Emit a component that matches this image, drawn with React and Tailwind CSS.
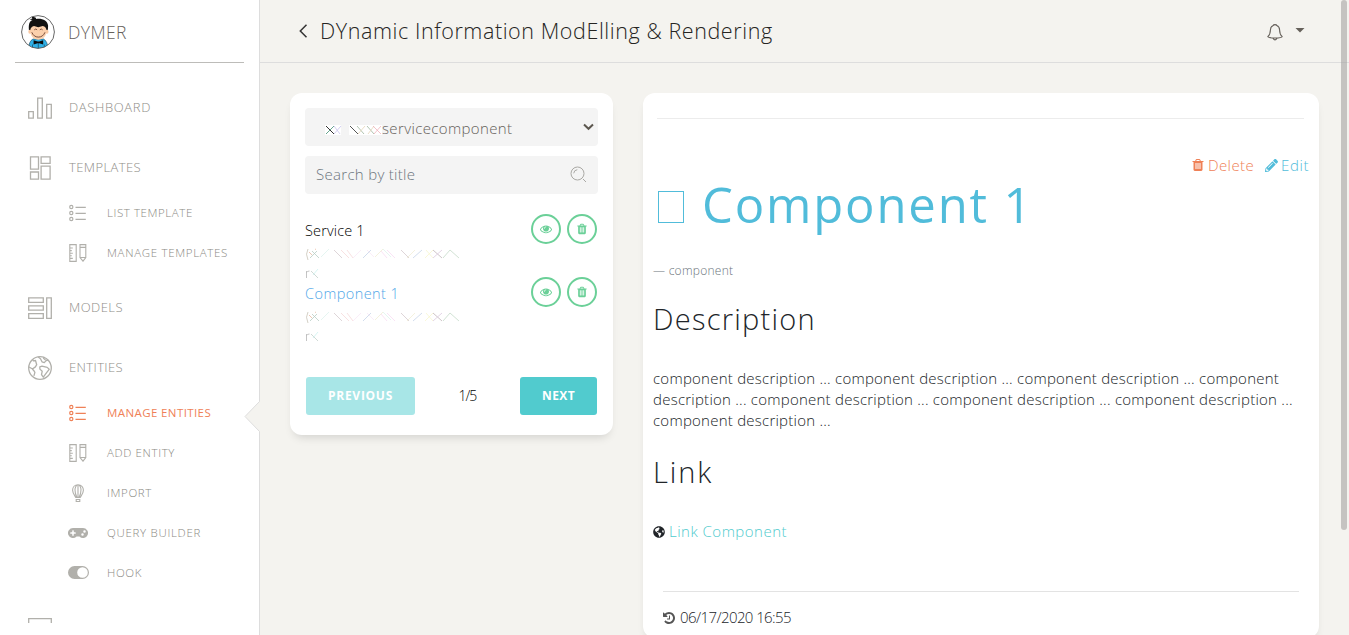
import { FaGamepad, FaGlobeAmericas, FaPencilAlt } from "react-icons/fa";

function BarsIcon() {
  return (
    <svg width="24" height="24" viewBox="0 0 24 24" fill="none" stroke="currentColor" strokeWidth="1.3">
      <path d="M.7 15.600h4.600v6.600H.7zM9.700 2.100h4.600v20.100H9.700zM18.700 8.400h4.600v13.800h-4.600z" />
    </svg>
  );
}

function TilesIcon() {
  return (
    <svg width="24" height="24" viewBox="0 0 24 24" fill="none" stroke="currentColor" strokeWidth="1.3">
      <path d="M2.500.8h8v12.400h-8zM13.100.8h9v6.600h-9zM2.500 16h8v7.200h-8zM13.100 10.200h9v13h-9z" />
    </svg>
  );
}

function ModelsIcon() {
  return (
    <svg width="24" height="24" viewBox="0 0 24 24" fill="none" stroke="currentColor" strokeWidth="1.3">
      <path d="M.7 1.900h14.600v4.400H.7zM.7 9.800h14.600v4.400H.7zM.7 17.700h14.600v4.600H.7zM18.700 1.900h4.600v20.400h-4.600z" />
    </svg>
  );
}

function EarthIcon() {
  return (
    <svg width="24" height="24" viewBox="0 0 24 24" fill="none" stroke="currentColor" strokeWidth="1.3" strokeLinejoin="round">
      <circle cx="12" cy="12" r="11.3" />
      <path d="M4.600 3.600l.8 1.200 2.100-.3 1.200 4.200-1.300 2.200-3 2.100 1.700 2 .8 1.300-1 3.600M4.600 13l-3.600-2M10.200.9l2.300 1.900 1.500 3 2.300.8 1.800-2 2.200-.6M16.200.8l-.7 1.400 2 1.800M11.800 10.800l2.200-.6 5.200 1.200 2 1.900-2.600 3.400-3.300 4.500-1.800-2.600.7-3.300-2.300-2.200z" />
    </svg>
  );
}

function ScreenIcon() {
  return (
    <svg width="24" height="24" viewBox="0 0 24 24" fill="none" stroke="currentColor" strokeWidth="1.3">
      <path d="M.7 2.600h22.600v16H.7z" />
    </svg>
  );
}

function ListIcon() {
  return (
    <svg width="18" height="18" viewBox="0 0 18 18" fill="none" stroke="currentColor" strokeWidth="1.2">
      <circle cx="2.3" cy="3" r="1.600" />
      <circle cx="2.3" cy="9" r="1.600" />
      <circle cx="2.3" cy="15" r="1.600" />
      <path d="M6.500 3.400h10.300M6.500 9.400h10.300M6.500 15.400h10.300" />
    </svg>
  );
}

function RulerIcon() {
  return (
    <svg width="18" height="18" viewBox="0 0 18 18" fill="none" stroke="currentColor" strokeWidth="1.1">
      <path d="M.8.6h6.400v16.800H.8zM1 4h2.800M1 6.600h1.800M1 9.200h2.800M1 11.800h1.800M1 14.400h2.800M11 .6h5.800v12.900L14 17.200l-3-3.700zM11 3.400h5.800M11 13.500h5.800" />
    </svg>
  );
}

function BalloonIcon() {
  return (
    <svg width="18" height="18" viewBox="0 0 18 18" fill="none" stroke="currentColor" strokeWidth="1.1">
      <path d="M9 .7c3.300 0 5.400 2.500 5.400 5.600 0 2.900-2 5-3.200 7.100H6.800C5.600 11.300 3.600 9.200 3.600 6.300 3.600 3.200 5.700.7 9 .7zM7.800 13.200C6.600 10.800 6 8.400 6 5.800 6 3.500 7.200.8 9 .8s3 2.700 3 5c0 2.600-.6 5-1.800 7.400M9 .7v12.700M7.200 15.500h3.600v2H7.200z" />
    </svg>
  );
}

function ToggleIcon() {
  return (
    <svg className="-mt-px" width="21" height="13" viewBox="0 0 21 13">
      <path fill="currentColor" fillRule="evenodd" d="M6.500 0h8a6.500 6.500 0 0 1 0 13h-8a6.500 6.500 0 0 1 0-13zM14.500 1.200a5.300 5.300 0 1 0 0 10.600 5.300 5.300 0 0 0 0-10.600z" />
    </svg>
  );
}

function TrashIcon({ className }) {
  return (
    <svg className={className} viewBox="0 0 1792 1792" fill="currentColor">
      <path d="M704 1376v-704q0-14-9-23t-23-9h-64q-14 0-23 9t-9 23v704q0 14 9 23t23 9h64q14 0 23-9t9-23zm256 0v-704q0-14-9-23t-23-9h-64q-14 0-23 9t-9 23v704q0 14 9 23t23 9h64q14 0 23-9t9-23zm256 0v-704q0-14-9-23t-23-9h-64q-14 0-23 9t-9 23v704q0 14 9 23t23 9h64q14 0 23-9t9-23zm-544-992h448l-48-117q-7-9-17-11h-317q-10 2-17 11zm928 32v64q0 14-9 23t-23 9h-96v948q0 83-47 143.500t-113 60.500h-832q-66 0-113-58.500t-47-141.500v-952h-96q-14 0-23-9t-9-23v-64q0-14 9-23t23-9h309l70-167q15-37 54-63t79-26h320q40 0 79 26t54 63l70 167h309q14 0 23 9t9 23z" />
    </svg>
  );
}

function EyeIcon() {
  return (
    <svg className="size-3" viewBox="0 0 1792 1792" fill="currentColor">
      <path d="M1664 960q-152-236-381-353 61 104 61 225 0 185-131.500 316.500t-316.500 131.500-316.500-131.500-131.500-316.500q0-121 61-225-229 117-381 353 133 205 333.500 326.500t434.500 121.500 434.500-121.500 333.500-326.500zm-720-384q0-20-14-34t-34-14q-125 0-214.500 89.500t-89.500 214.500q0 20 14 34t34 14 34-14 14-34q0-86 61-147t147-61q20 0 34-14t14-34zm848 384q0 34-20 69-140 230-376.500 368.500t-499.500 138.500-499.500-139-376.500-368q-20-35-20-69t20-69q140-229 376.500-368t499.500-139 499.500 139 376.500 368q20 35 20 69z" />
    </svg>
  );
}

function HistoryIcon() {
  return (
    <svg className="-ml-px size-[14px] text-[#555]" viewBox="0 0 1792 1792" fill="currentColor">
      <path d="M1664 896q0 156-61 298t-164 245-245 164-298 61q-172 0-327-72.500t-264-204.500q-7-10-6.500-22.500t8.500-20.500l137-138q10-9 25-9 16 2 23 12 73 95 179 147t225 52q104 0 198.500-40.500t163.500-109.500 109.500-163.500 40.500-198.500-40.500-198.500-109.500-163.500-163.500-109.500-198.500-40.500q-98 0-188 35.500t-160 101.500l137 138q31 30 14 69-17 40-59 40h-448q-26 0-45-19t-19-45v-448q0-42 40-59 39-17 69 14l130 129q107-101 244.500-156.500t284.500-55.500q156 0 298 61t245 164 164 245 61 298zm-640-288v448q0 14-9 23t-23 9h-320q-14 0-23-9t-9-23v-64q0-14 9-23t23-9h224v-352q0-14 9-23t23-9h64q14 0 23 9t9 23z" />
    </svg>
  );
}

function Avatar() {
  return (
    <svg className="mt-px" width="34" height="34" viewBox="0 0 34 34">
      <defs>
        <clipPath id="face">
          <circle cx="17" cy="17" r="16.300" />
        </clipPath>
      </defs>
      <circle cx="17" cy="17" r="16.400" fill="#fff" />
      <g clipPath="url(#face)">
        <path d="M7.500 34c.3-5 1.500-8.500 4.500-10h10.500c3 1.500 4.200 5 4.500 10z" fill="#2fb1e8" stroke="#17455c" strokeWidth=".6" />
        <path d="M17.300 27v7M11.500 29.500v4M23.300 29.500v4" stroke="#17455c" strokeWidth=".7" />
        <path d="M8.200 17C7 9.500 8.500 6 11.500 5L8.600 4.400l2.700-.8L10.500 1.400l4 1.200.8 1.400c6-.8 11.500 1.800 11.800 6.800.1 2-.2 4.200-.8 6.200z" fill="#111" />
        <ellipse cx="8.900" cy="16.800" rx="1.600" ry="2" fill="#f9c9a3" />
        <ellipse cx="25.900" cy="16.800" rx="1.600" ry="2" fill="#f9c9a3" />
        <path d="M9.300 15.800c0-3 1.700-4.200 3.700-4.800l4.300 1.300 4.400-1.300c2.400.5 3.800 2 3.800 4.800 0 5.500-3.500 9-8.100 9s-8.100-3.500-8.100-9z" fill="#fbd0ac" />
        <path d="M13.300 14.800q1.500-1.600 2.800 0M18.800 14.800q1.500-1.600 2.800 0M10.800 17.300q2 4.800 6.600 4.800t6.600-4.800" fill="none" stroke="#5b2f22" strokeWidth=".8" />
        <path d="M12.600 25.300l4 1.200h1.600l4-1.200v4.200l-4-1.200h-1.600l-4 1.200z" fill="#0c0c0c" />
      </g>
      <circle cx="17" cy="17" r="16.400" fill="none" stroke="#555" strokeWidth=".9" />
    </svg>
  );
}

function NavItem({ icon, label, tracking }) {
  return (
    <div className="mt-[10px] flex h-[50px] items-center pl-7 text-[#8f8e88]">
      <span className="mt-px flex w-6 justify-center text-[#b1b0ab]">{icon}</span>
      <span className={`ml-[17px] mt-0.5 text-[13px] ${tracking}`}>{label}</span>
    </div>
  );
}

function SubItem({ icon, label, tracking, active }) {
  return (
    <div className={`flex h-10 items-center pl-[67px] text-[11.5px] ${active ? "font-normal text-[#ef8157]" : "text-[#8a8983]"}`}>
      <span className={`flex w-[22px] justify-center ${active ? "" : "text-[#b1b0ab]"}`}>{icon}</span>
      <span className={`ml-[18px] whitespace-nowrap ${tracking}`}>{label}</span>
    </div>
  );
}

function RedactedLine() {
  return (
    <svg className="block" width="160" height="34" viewBox="0 0 160 34" fill="none" strokeWidth=".8">
      <path d="M3 4q-3 5 0 11" stroke="#c9c4b8" />
      <path d="M4 7l3 3M10 4.500l1-.5" stroke="#e8b9a0" />
      <path d="M5 13l7-7M14 13l-7-7" stroke="#b8cdc4" />
      <path d="M16 12l8-8M86 12l-8-8" stroke="#def3ee" />
      <path d="M29 5l8 8M96 5l8 8" stroke="#d6cace" />
      <path d="M36 5l8 8M42 5l6 8" stroke="#f6d9d9" />
      <path d="M48 13l8-8M62 5l7 7" stroke="#f9e9f6" />
      <path d="M58 13l8-8M108 13l9-8" stroke="#c6d4e8" />
      <path d="M70 12l8-8M102 13l8-8" stroke="#f1edd6" />
      <path d="M82 5l8 8M76 6l6 7" stroke="#f8dcf3" />
      <path d="M120 13l8-8M121 5l7 8" stroke="#f8f6cf" />
      <path d="M128 5l9 8" stroke="#c1b5ba" />
      <path d="M128 13l9-8" stroke="#dccadf" />
      <path d="M138 13l7-8 9 8" stroke="#c5dac9" />
      <path d="M1.500 33v-7M1.500 27.500q1-1.500 3-1.500" stroke="#b5b5b5" />
      <path d="M6 26l7 7" stroke="#c4d1ca" />
      <path d="M8 30l5-6" stroke="#cdf3f0" />
    </svg>
  );
}

function RoundButton({ children }) {
  return (
    <button className="flex size-[30px] items-center justify-center rounded-full border-2 border-[#6bd098] text-[#6bd098]">
      {children}
    </button>
  );
}

function Entity({ title, style }) {
  return (
    <div className="flex h-[63px] justify-between pr-px">
      <div>
        <div className={`h-[21px] pt-1.5 text-[14.5px] leading-[21px] ${style}`}>{title}</div>
        <div className="mt-2.5">
          <RedactedLine />
        </div>
      </div>
      <div className="flex gap-1.5">
        <RoundButton><EyeIcon /></RoundButton>
        <RoundButton><TrashIcon className="size-3" /></RoundButton>
      </div>
    </div>
  );
}

function Sidebar() {
  return (
    <aside className="relative flex w-[260px] shrink-0 flex-col border-r border-[#ddd] bg-white">
      <div className="mx-[15px] flex h-[63px] shrink-0 items-center border-b border-[#bdbcb9] pl-1.5">
        <Avatar />
        <span className="ml-[13px] mt-0.5 text-[17.5px] tracking-[0.4px] text-[#66615b]">DYMER</span>
      </div>
      <nav className="mt-[9px] h-[551px] overflow-hidden">
        <NavItem icon={<BarsIcon />} label="DASHBOARD" tracking="tracking-[0.64px]" />
        <NavItem icon={<TilesIcon />} label="TEMPLATES" tracking="tracking-[0.4px]" />
        <div className="-mb-px mt-px">
          <SubItem icon={<ListIcon />} label="LIST TEMPLATE" tracking="tracking-[0.58px]" />
          <SubItem icon={<RulerIcon />} label="MANAGE TEMPLATES" tracking="tracking-[0.68px]" />
        </div>
        <NavItem icon={<ModelsIcon />} label="MODELS" tracking="tracking-[0.45px]" />
        <NavItem icon={<EarthIcon />} label="ENTITIES" tracking="tracking-[0.37px]" />
        <div className="-mb-px mt-px">
          <SubItem active icon={<ListIcon />} label="MANAGE ENTITIES" tracking="tracking-[0.4px]" />
          <SubItem icon={<RulerIcon />} label="ADD ENTITY" tracking="tracking-[0.62px]" />
          <SubItem icon={<BalloonIcon />} label="IMPORT" tracking="tracking-[0.63px]" />
          <SubItem icon={<FaGamepad size={20} />} label="QUERY BUILDER" tracking="tracking-[0.7px]" />
          <SubItem icon={<ToggleIcon />} label="HOOK" tracking="tracking-[0.62px]" />
        </div>
        <NavItem icon={<ScreenIcon />} label="" tracking="" />
      </nav>
      <svg className="absolute left-[244px] top-[401px]" width="16" height="32" viewBox="0 0 16 32">
        <path d="M16 0L1 15.500 16 31z" fill="#f4f3ef" />
        <path d="M15.500.5L1 15.500l14.500 15" fill="none" stroke="#ddd" />
      </svg>
    </aside>
  );
}

function Header() {
  return (
    <header className="flex h-[63px] shrink-0 items-center justify-between border-b border-[#ddd] pl-[38px] pr-11">
      <div className="flex items-center">
        <svg width="10" height="14" viewBox="0 0 10 14" fill="none" stroke="#333" strokeWidth="1.500">
          <path d="M8.500.8L2.300 7l6.200 6.200" />
        </svg>
        <h1 className="ml-3 text-[21.5px] leading-[30px] tracking-[0.58px] text-[#252422]">
          DYnamic Information ModElling &amp; Rendering
        </h1>
      </div>
      <div className="flex items-center text-[#66615b]">
        <svg className="mt-0.5" width="16" height="17" viewBox="0 0 16 17" fill="none" stroke="currentColor" strokeWidth="1.1">
          <path d="M6.200 1.500C6.500.3 9.500.3 9.800 1.500c2 .8 2.800 2.300 2.800 4.500 0 3.500.6 4.800 2.600 6.600-.3.900-3.500 1.400-7.200 1.400S1.100 13.500.8 12.600C2.800 10.800 3.400 9.500 3.400 6c0-2.200.8-3.700 2.800-4.500zM6 14.200q2 3.300 4 0" />
        </svg>
        <svg className="-mt-0.5 ml-3" width="10" height="5" viewBox="0 0 10 5" fill="currentColor">
          <path d="M.5 0h9L5 4.500z" />
        </svg>
      </div>
    </header>
  );
}

function EntityList() {
  return (
    <section className="h-[342px] w-[323px] shrink-0 rounded-xl bg-white p-[15px] shadow-[0_6px_10px_-4px_rgba(0,0,0,0.15)]">
      <div className="flex h-[38px] items-center rounded bg-[#f4f4f4] pl-5 pr-1">
        <svg className="mt-[5px]" width="57" height="12" viewBox="0 0 57 12" fill="none">
          <path d="M0 1h16v10H0zM24 1h33v10H24z" fill="#fff" />
          <path d="M1 2l8 8" stroke="#333" />
          <path d="M1 10l8-8" stroke="#67a58f" />
          <path d="M9 10l7-8M9 2l6 8" stroke="#c9c4ee" strokeWidth=".8" />
          <path d="M25 2l8 8" stroke="#555" />
          <path d="M32 2l7 8M42 2l7 8" stroke="#9db59d" strokeWidth=".8" />
          <path d="M33 10l7-8M43 10l6-8" stroke="#e6d5b8" strokeWidth=".8" />
          <path d="M48 2l8 8M49 10l7-8" stroke="#efb2bb" strokeWidth=".8" />
        </svg>
        <span className="mt-0.5 text-[15px] tracking-[0.36px] text-[#66615b]">servicecomponent</span>
        <svg className="ml-auto" width="11" height="8" viewBox="0 0 11 8" fill="none" stroke="#5c574f" strokeWidth="2">
          <path d="M1 1.500l4.500 4.300L10 1.500" />
        </svg>
      </div>
      <div className="mt-2.5 flex h-[38px] items-center justify-between rounded bg-[#f4f4f4] pl-[11px] pr-[11px]">
        <span className="-mt-0.5 text-[15px] tracking-[0.3px] text-[#6c757d]">Search by title</span>
        <svg className="-mt-px" width="17" height="17" viewBox="0 0 17 17" fill="none" stroke="#aaa9a5" strokeWidth="1">
          <circle cx="7.500" cy="7.500" r="6.500" />
          <path d="M3.700 7.300Q4 4 7.300 3.700M13 13l3 3" />
        </svg>
      </div>
      <div className="mt-5">
        <Entity title="Service 1" style="tracking-[0.16px] text-black" />
        <Entity title="Component 1" style="tracking-[0.44px] text-[#51a7e8]" />
      </div>
      <div className="mt-[37px] flex items-center justify-between pl-px pr-px text-[12px] font-bold text-white">
        <button className="h-[38px] w-[109px] rounded-[3px] bg-[#a8e6e7] tracking-[0.73px]">PREVIOUS</button>
        <span className="-mt-px text-[14px] font-light tracking-[-1px] text-black">1/5</span>
        <button className="h-[38px] w-[77px] rounded-[3px] bg-[#51cbce] tracking-[0.39px]">NEXT</button>
      </div>
    </section>
  );
}

function EntityDetail() {
  return (
    <section className="h-[545px] flex-1 rounded-xl bg-white px-2.5 pt-[25px] text-[15px] text-[#212529] shadow-[0_6px_10px_-4px_rgba(0,0,0,0.15)]">
      <hr className="ml-1 mr-[5px] border-[#ececec]" />
      <div className="mt-[35px] flex h-[22px] items-center justify-end">
        <span className="flex items-center gap-[3px] tracking-[0.38px] text-[#ef8157]">
          <TrashIcon className="size-[14px]" />
          Delete
        </span>
        <span className="ml-[11px] flex items-center gap-[3px] tracking-[0.59px] text-[#51bcda]">
          <FaPencilAlt size={13} />
          Edit
        </span>
      </div>
      <h2 className="flex h-[58px] items-center pl-[5px] text-[49px] leading-[58px] text-[#51bcda]">
        <span className="mt-[3px] h-8 w-[26px] border border-current" />
        <span className="-mt-0.5 ml-[18px] font-normal tracking-[1.85px]">Component 1</span>
      </h2>
      <p className="mt-[28px] text-[12px] leading-[18px] tracking-[0.26px] text-[#6c757d]">— component</p>
      <h3 className="mt-5 text-[29px] leading-[38px] tracking-[1.25px]">Description</h3>
      <p className="mt-[30px] whitespace-pre leading-[21px] tracking-[0.24px]">
        {"component description ... component description ... component description ... component\n"}
        {"description ... component description ... component description ... component description ...\n"}
        {"component description ..."}
      </p>
      <h3 className="mt-[22px] text-[29px] leading-[38px] tracking-[1.9px]">Link</h3>
      <p className="mt-[30px] flex h-[21px] items-center gap-1">
        <FaGlobeAmericas size={12} />
        <span className="tracking-[0.49px] text-[#51cbce]">Link Component</span>
      </p>
      <div className="mx-2.5 mt-[49px] border-t border-[#e3e3e3] pt-[15px]">
        <p className="flex h-[21px] items-center gap-1 tracking-[-0.59px]">
          <HistoryIcon />
          06/17/2020 16:55
        </p>
      </div>
    </section>
  );
}

export default function App() {
  return (
    <div className="relative flex h-[635px] w-full overflow-hidden bg-[#f4f3ef] font-['Open_Sans',sans-serif] font-light">
      <Sidebar />
      <main className="flex min-w-0 flex-1 flex-col">
        <Header />
        <div className="flex items-start gap-[30px] px-[30px] pt-[30px]">
          <EntityList />
          <EntityDetail />
        </div>
      </main>
      <div className="absolute right-0.5 top-0 h-[530px] w-1.5 rounded-full bg-[#a5a3a1]/60" />
    </div>
  );
}
